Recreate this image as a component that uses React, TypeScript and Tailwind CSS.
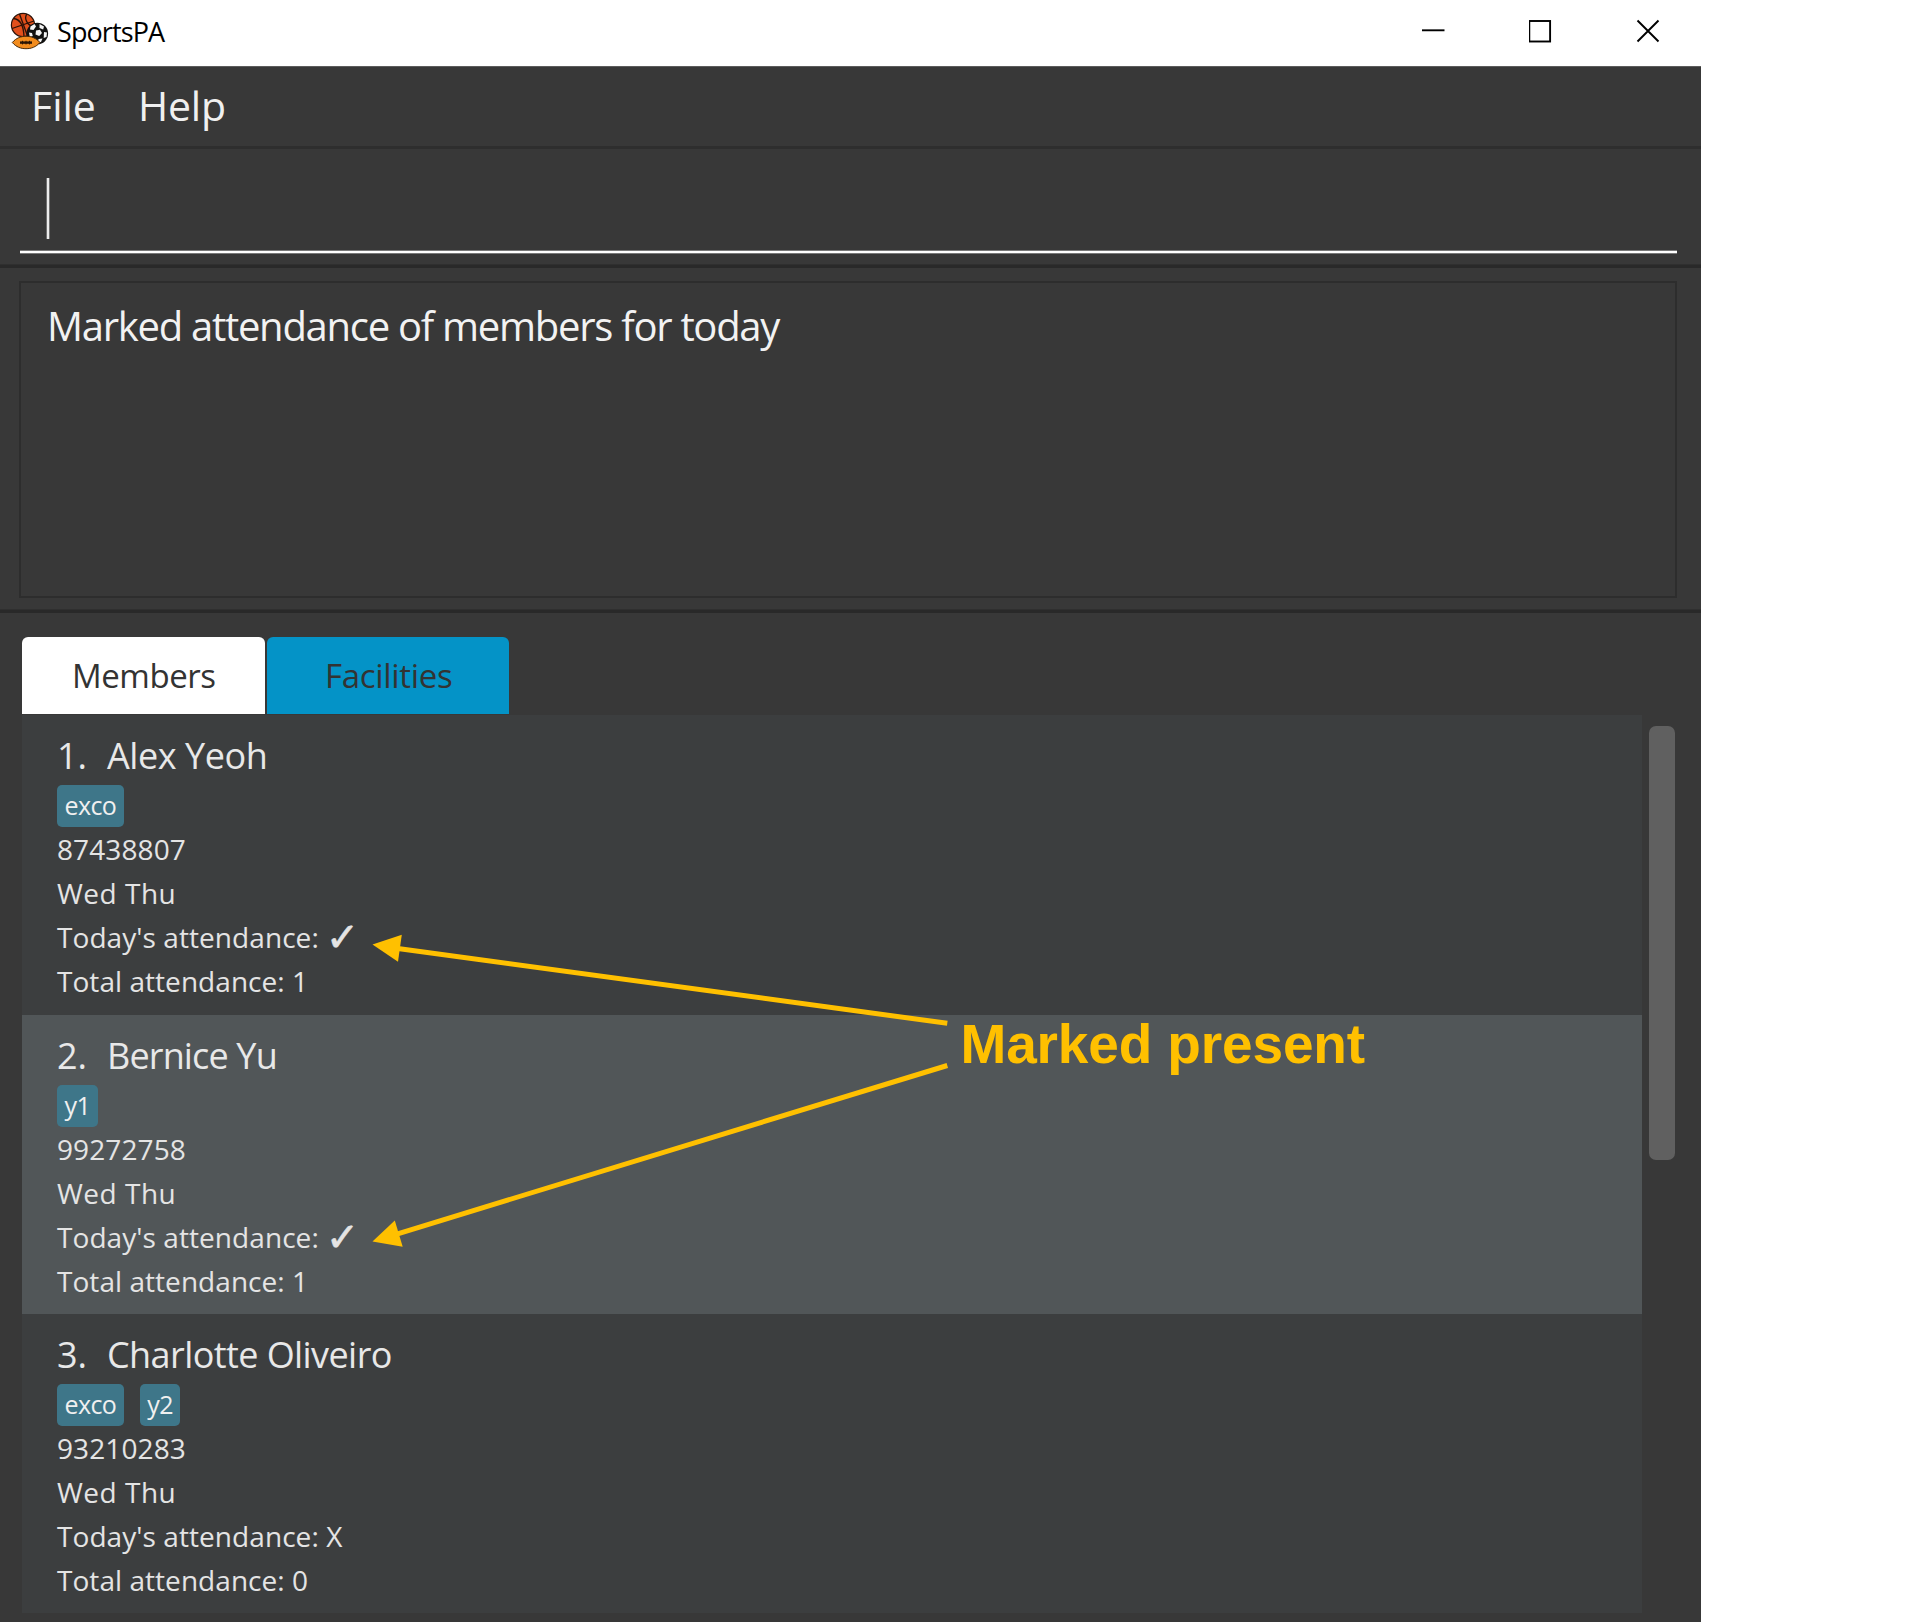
type Line = { text: string; spacing: string; check?: boolean };
type Member = {
  index: string;
  name: string;
  nameClass: string;
  tags: string[];
  lines: Line[];
};

const attendance = (phone: string, today: string, total: string): Line[] => [
  { text: phone, spacing: "tracking-[0.1px]" },
  { text: "Wed Thu", spacing: "tracking-[0.5px]" },
  { text: "Today's attendance: " + today, spacing: "tracking-[0.07px]", check: today === "" },
  { text: "Total attendance: " + total, spacing: "tracking-[0.05px]" },
];

const members: Member[] = [
  {
    index: "1.",
    name: "Alex Yeoh",
    nameClass: "tracking-[-0.45px]",
    tags: ["exco"],
    lines: attendance("87438807", "", "1"),
  },
  {
    index: "2.",
    name: "Bernice Yu",
    nameClass: "tracking-[-0.85px]",
    tags: ["y1"],
    lines: attendance("99272758", "", "1"),
  },
  {
    index: "3.",
    name: "Charlotte Oliveiro",
    nameClass: "tracking-[-0.58px]",
    tags: ["exco", "y2"],
    lines: attendance("93210283", "X", "0"),
  },
];

function AppIcon() {
  return (
    <svg className="ml-[10px] h-[40px] w-[40px] shrink-0" viewBox="10 12 40 40">
      <circle cx="23" cy="25" r="11.6" fill="#e2501c" stroke="#2a1208" strokeWidth="1.2" />
      <g fill="none" stroke="#2a1208" strokeWidth="1.3">
        <path d="M12 28.5 34 21" />
        <path d="M19.5 14 27.5 36" />
        <path d="M13.5 18.5c5 .5 10 5 10.500 18" />
        <path d="M27 13.800c-3 4-1 11 7.500 13.500" />
      </g>
      <circle cx="37.300" cy="33.500" r="10.800" fill="#111111" />
      <g fill="#f4f4f4">
        <path d="M30.500 26.500l4-2.500 1.500 2.500-2.500 3.500-3.500-.5z" />
        <path d="M39.500 24l4.500 2.500-.8 3-3.700-1.500z" />
        <path d="M36 30.500l4-.8 2 3.300-2.800 3-3.700-1.500z" />
        <path d="M44 32l3 .5-.5 4.500-2.800 1z" />
        <path d="M29 32.500l3 .5.8 3-3 1z" />
        <path d="M38.500 39l4-.5-1.500 3.500-3 .6z" />
      </g>
      <path
        d="M12.300 42.500c4-4.600 8.500-6.200 13.700-6.200s10 1.600 14 6.200c-4 4.600-8.800 6.200-14 6.200s-9.700-1.600-13.700-6.200z"
        fill="#f28c1e"
        stroke="#4a2a08"
        strokeWidth="1"
      />
      <path d="M20 42.600h12" stroke="#2a1505" strokeWidth="2.400" />
      <path d="M22.500 40.800v3.600M26 40.800v3.600M29.500 40.800v3.600" stroke="#2a1505" strokeWidth="1" />
    </svg>
  );
}

function TitleBar() {
  return (
    <header className="flex h-[66px] items-start bg-white">
      <div className="flex h-[64px] items-center">
        <AppIcon />
        <span className="ml-[7px] text-[27px] leading-[40px] tracking-[-0.9px] text-black">SportsPA</span>
      </div>
      <div className="ml-auto mr-[41px] mt-[19px] flex gap-[83px] text-black">
        <svg className="h-[24px] w-[24px]" viewBox="0 0 24 24" fill="none" stroke="currentColor">
          <path d="M0 11.300h22.500" strokeWidth="1.900" />
        </svg>
        <svg className="h-[24px] w-[24px]" viewBox="0 0 24 24" fill="none" stroke="currentColor">
          <rect x="0.300" y="2" width="20.800" height="20.500" strokeWidth="1.900" />
        </svg>
        <svg className="h-[24px] w-[24px]" viewBox="0 0 24 24" fill="none" stroke="currentColor">
          <path d="M1.500 1.500l21 21M22.500 1.500l-21 21" strokeWidth="1.900" />
        </svg>
      </div>
    </header>
  );
}

function Divider() {
  return <div className="h-[4px] border-t border-[#2f2f2f] bg-[#292929]" />;
}

function Tag({ label }: { label: string }) {
  return (
    <span className="h-[42px] rounded-[5px] bg-[#3e7689] px-[7.500px] text-[25px] leading-[40px] tracking-[-0.6px] text-[#f0f0f0]">
      {label}
    </span>
  );
}

function MemberRow({ member, alt }: { member: Member; alt: boolean }) {
  return (
    <li className={alt ? "h-[299px] bg-[#515658] pl-[35px] pt-[16px]" : "h-[299.5px] bg-[#3c3e3f] pl-[35px] pt-[16px]"}>
      <div className="flex h-[48px] text-[36px] leading-[49px] text-[#e8e8e8]">
        <span className="w-[50px]">{member.index}</span>
        <span className={member.nameClass}>{member.name}</span>
      </div>
      <div className="mt-[6px] flex gap-[16px]">
        {member.tags.map((tag) => (
          <Tag key={tag} label={tag} />
        ))}
      </div>
      <div className={alt ? "text-[28px] text-[#e4e4e4]" : "mt-[0.4px] text-[28px] text-[#e4e4e4]"}>
        {member.lines.map((line) => (
          <div key={line.text} className="flex h-[44px] items-center leading-[44px]">
            <span className={line.spacing}>{line.text}</span>
            {line.check && (
              <span className="ml-[7px] font-['DejaVu_Sans'] text-[40px] leading-[44px] [-webkit-text-stroke:0.6px_#e4e4e4]">
                ✓
              </span>
            )}
          </div>
        ))}
      </div>
    </li>
  );
}

function Annotation() {
  return (
    <div className="pointer-events-none absolute left-[372px] top-[934px] h-[320px] w-[1000px]">
      <svg className="absolute left-0 top-0 h-[320px] w-[580px]" viewBox="372 934 580 320">
        <g stroke="#ffc000" strokeWidth="5">
          <path d="M947.300 1023.300L396 948.200" />
          <path d="M947.300 1065.500L396 1234.300" />
        </g>
        <g fill="#ffc000">
          <path d="M372.500 944.600L401.800 934.800 398 961.800z" />
          <path d="M372.500 1241.400L394.800 1220.600 402.700 1246.700z" />
        </g>
      </svg>
      <span className="absolute left-[588.5px] top-[78px] whitespace-nowrap font-['Liberation_Sans'] text-[55px] font-bold leading-[64px] tracking-[-0.15px] text-[#ffc000]">
        Marked present
      </span>
    </div>
  );
}

export default function App() {
  return (
    <div className="h-[1622px] w-[1915px] overflow-hidden bg-white font-['Open_Sans',sans-serif]">
      <div className="relative flex h-full w-[1701px] flex-col bg-[#383838]">
        <TitleBar />
        <nav className="flex h-[83px] border-b-[3px] border-t border-b-[#2e2e2e] border-t-[#5c5c5c] pl-[31px] text-[41px] leading-[77px] text-[#f0f0f0]">
          <span className="w-[107px]">File</span>
          <span className="tracking-[-0.2px]">Help</span>
        </nav>

        <div className="flex h-[115px] flex-col pl-[20px] pr-[24px]">
          <div className="ml-[26px] mt-[29px] h-[61px] w-[4px] border-x border-[#707070] bg-[#ececec]" />
          <div className="mt-[11px] h-[4px] border-y border-[#7a7a7a] bg-white" />
        </div>
        <Divider />

        <div className="ml-[18.500px] mr-[24px] mt-[13px] h-[317px] border-2 border-[#2d2d2d] pl-[26.500px] pt-[13px] text-[40px] leading-[60px] tracking-[-1.270px] text-[#f2f2f2]">
          Marked attendance of members for today
        </div>
        <div className="mt-[11px]">
          <Divider />
        </div>

        <div className="ml-[22px] mt-[24px] flex h-[78px] gap-[2px] text-[33px] leading-[77px] text-[#333333]">
          <div className="h-[77px] w-[242.500px] rounded-t-[6px] bg-white pl-[50px] tracking-[-0.45px]">Members</div>
          <div className="h-[77px] w-[242px] rounded-t-[6px] bg-[#0493c7] pl-[58.500px] tracking-[-0.3px]">Facilities</div>
        </div>

        <div className="ml-[22px] flex">
          <ul className="w-[1620px]">
            {members.map((member, i) => (
              <MemberRow key={member.index} member={member} alt={i % 2 === 1} />
            ))}
          </ul>
          <div className="ml-[7px] mt-[11px] h-[434px] w-[26px] rounded-[7px] bg-[#606060]" />
        </div>

        <Annotation />
      </div>
    </div>
  );
}
